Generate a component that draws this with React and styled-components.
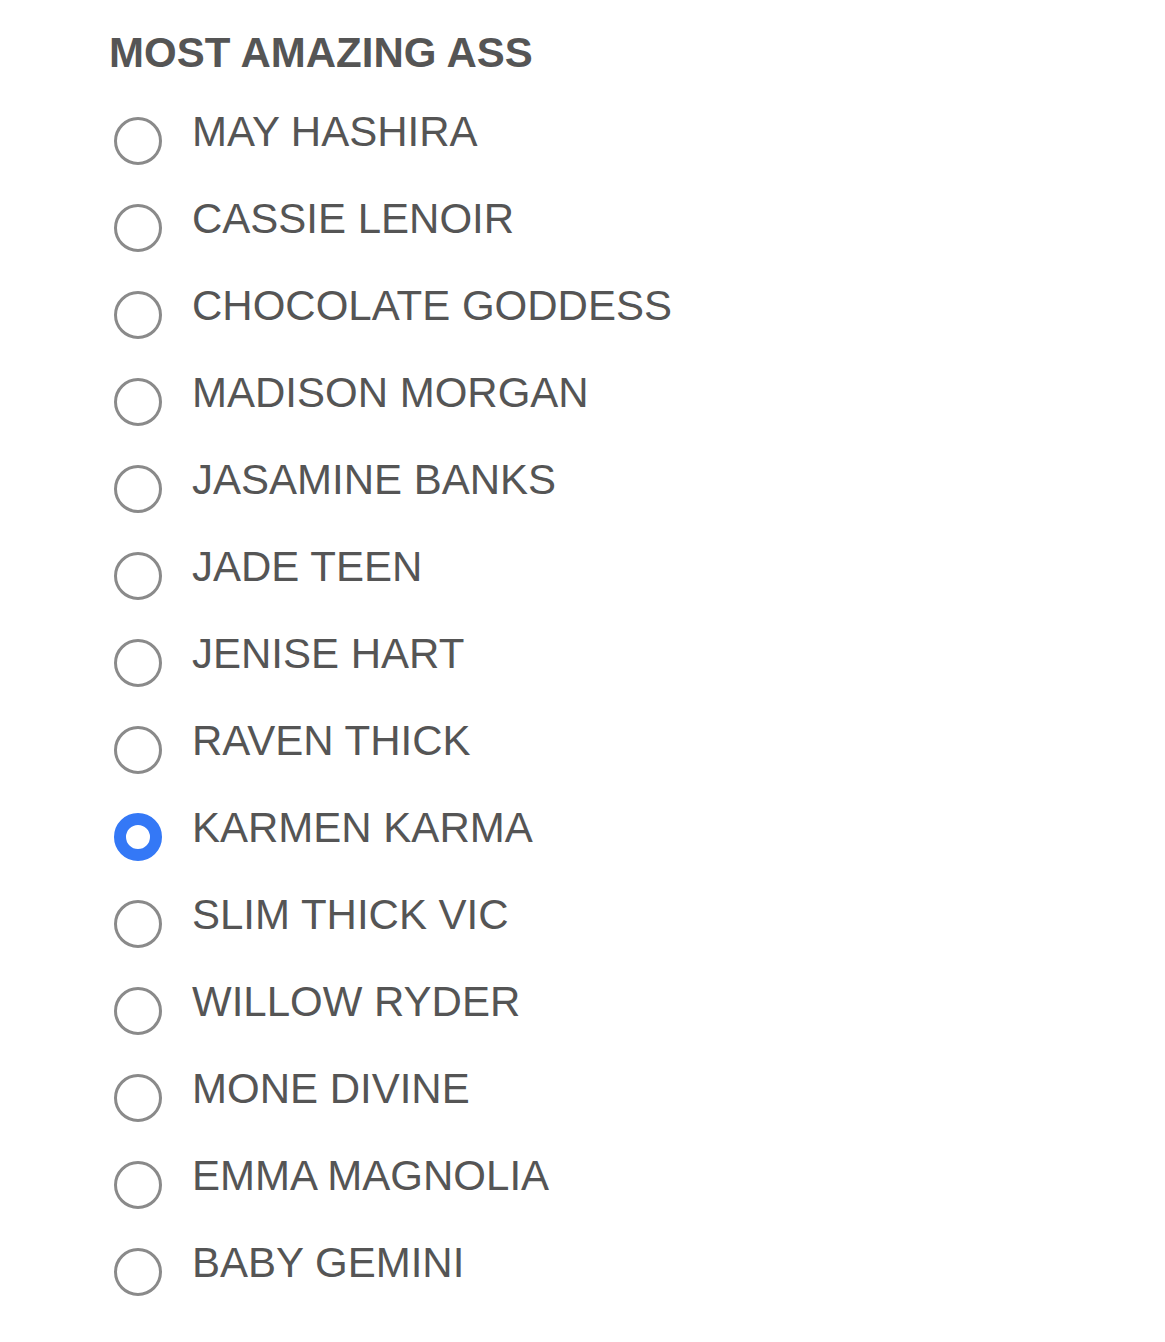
import React, { useState } from 'react'
import styled, { createGlobalStyle } from 'styled-components'

const GlobalStyle = createGlobalStyle`
    body {
        margin: 0;
        background: #ffffff;
        font-family: "Liberation Sans", Arial, Helvetica, sans-serif;
    }
`

const Page = styled.div`
    padding: 29px 0 0 109px;
`

const Title = styled.h2`
    margin: 0 0 12px 0;
    font-size: 42px;
    line-height: 48px;
    font-weight: 700;
    color: #555555;
`

const List = styled.div`
    display: flex;
    flex-direction: column;
`

const Row = styled.label`
    display: flex;
    align-items: flex-start;
    height: 87px;
    padding-left: 5px;
    gap: 30px;
    cursor: pointer;
`

const Radio = styled.span`
    box-sizing: border-box;
    flex: none;
    width: 48px;
    height: 48px;
    margin-top: 28px;
    border-radius: 50%;
    border: ${props => props.checked ? '12.5px solid #3478f6' : '3.5px solid #8a8a8a'};
    background: #ffffff;
`

const Label = styled.span`
    font-size: 42px;
    line-height: 85px;
    color: #555555;
    white-space: nowrap;
`

const names = [
    'MAY HASHIRA',
    'CASSIE LENOIR',
    'CHOCOLATE GODDESS',
    'MADISON MORGAN',
    'JASAMINE BANKS',
    'JADE TEEN',
    'JENISE HART',
    'RAVEN THICK',
    'KARMEN KARMA',
    'SLIM THICK VIC',
    'WILLOW RYDER',
    'MONE DIVINE',
    'EMMA MAGNOLIA',
    'BABY GEMINI',
]

const App = () => {
    const [selected, setSelected] = useState('KARMEN KARMA')

    return (
        <>
            <GlobalStyle />
            <Page>
                <Title>MOST AMAZING ASS</Title>
                <List>
                    {names.map(name => (
                        <Row key={name} onClick={() => setSelected(name)}>
                            <Radio checked={selected === name} />
                            <Label>{name}</Label>
                        </Row>
                    ))}
                </List>
            </Page>
        </>
    )
}

export default App
